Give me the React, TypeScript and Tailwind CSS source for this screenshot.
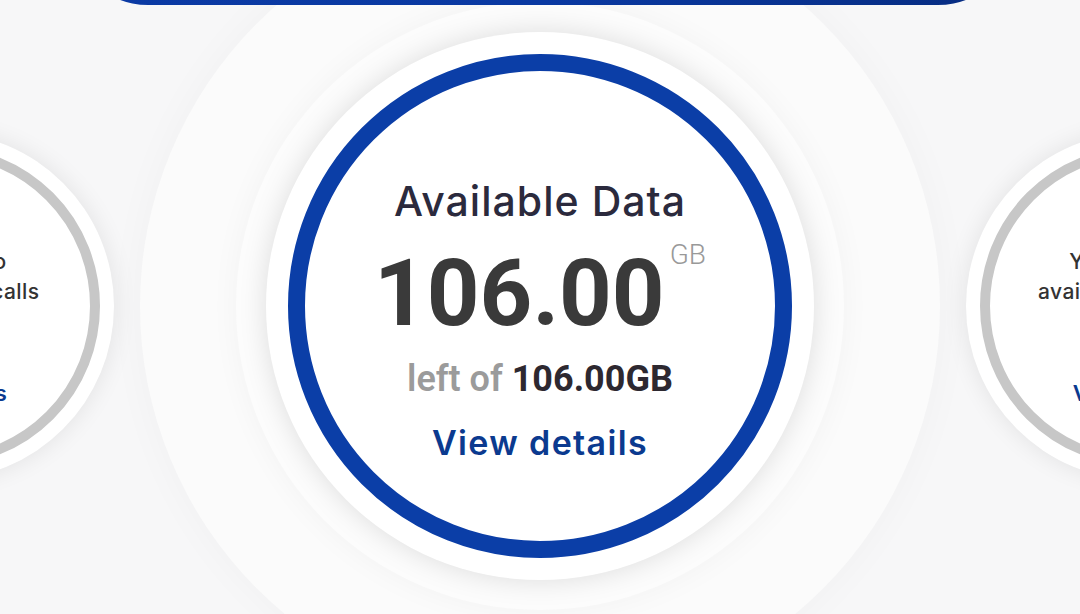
import React from "react";

const sans = { fontFamily: "Inter, 'Open Sans', sans-serif" } as React.CSSProperties;
const num = { fontFamily: "Roboto, 'Liberation Sans', sans-serif" } as React.CSSProperties;

function SideCircle({ line1, line2 }: { line1: string; line2: string }) {
  return (
    <div className="shrink-0 w-[348px] h-[348px] rounded-full bg-white shadow-[0_0_24px_rgba(0,0,0,0.09)] flex items-center justify-center">
      <div className="w-[320px] h-[320px] rounded-full border-[10px] border-[#c7c7c7] flex flex-col items-center pt-[91px]">
        <div className="text-[21px] leading-[30px] font-medium text-[#333333] text-center whitespace-nowrap tracking-[0.02em]" style={sans}>
          <div>{line1}</div>
          <div>{line2}</div>
        </div>
        <div className="mt-[71px] text-[22px] leading-[30px] font-semibold text-[#0b3a8f] whitespace-nowrap tracking-[0.02em]" style={sans}>
          View details
        </div>
      </div>
    </div>
  );
}

export default function App() {
  return (
    <div className="relative w-full h-[614px] overflow-hidden bg-[#f7f7f8]">
      <div className="relative z-20 ml-[68px] mr-[62px] h-[100px] -mt-[95px] rounded-b-[80px] bg-gradient-to-r from-[#0b3aa4] via-[#0a39a2] to-[#072c80]" />
      <div className="flex justify-center items-center gap-[152px] mt-[27px]">
        <SideCircle line1="Use credit to" line2="make national calls" />
        <div className="relative shrink-0 w-[548px] h-[548px]">
          <div className="absolute left-1/2 top-1/2 -translate-x-1/2 -translate-y-1/2 w-[800px] h-[800px] rounded-full bg-[#fbfbfb] shadow-[0_0_40px_rgba(0,0,0,0.03)]" />
          <div className="absolute left-1/2 top-1/2 -translate-x-1/2 -translate-y-1/2 w-[608px] h-[608px] rounded-full bg-[#fcfcfc] shadow-[0_0_30px_rgba(0,0,0,0.04)]" />
          <div className="relative w-[548px] h-[548px] rounded-full bg-white shadow-[0_0_28px_rgba(0,0,0,0.13)] flex items-center justify-center">
            <div className="w-[504px] h-[504px] rounded-full border-[17px] border-[#0b3ea7] flex flex-col items-center pt-[106px]">
              <div className="text-[41px] leading-[48px] font-medium text-[#2b2a3d] tracking-[0.025em] whitespace-nowrap" style={sans}>
                Available Data
              </div>
              <div className="flex items-start mt-[23px]">
                <span className="text-[92px] leading-[92px] font-bold text-[#3a3a3a]" style={num}>106.00</span>
                <span className="ml-[5px] -mt-[7px] text-[28px] leading-[28px] font-light text-[#999999]" style={num}>GB</span>
              </div>
              <div className="mt-[19px] text-[36px] leading-[40px] whitespace-nowrap" style={num}>
                <span className="font-semibold text-[#9b9b9b]">left of </span>
                <span className="font-bold text-[#2d2830]">106.00GB</span>
              </div>
              <div className="mt-[24px] text-[34px] leading-[40px] font-semibold text-[#0b3a8f] tracking-[0.04em] whitespace-nowrap" style={sans}>
                View details
              </div>
            </div>
          </div>
        </div>
        <SideCircle line1="Your call time" line2="available for talking" />
      </div>
    </div>
  );
}
